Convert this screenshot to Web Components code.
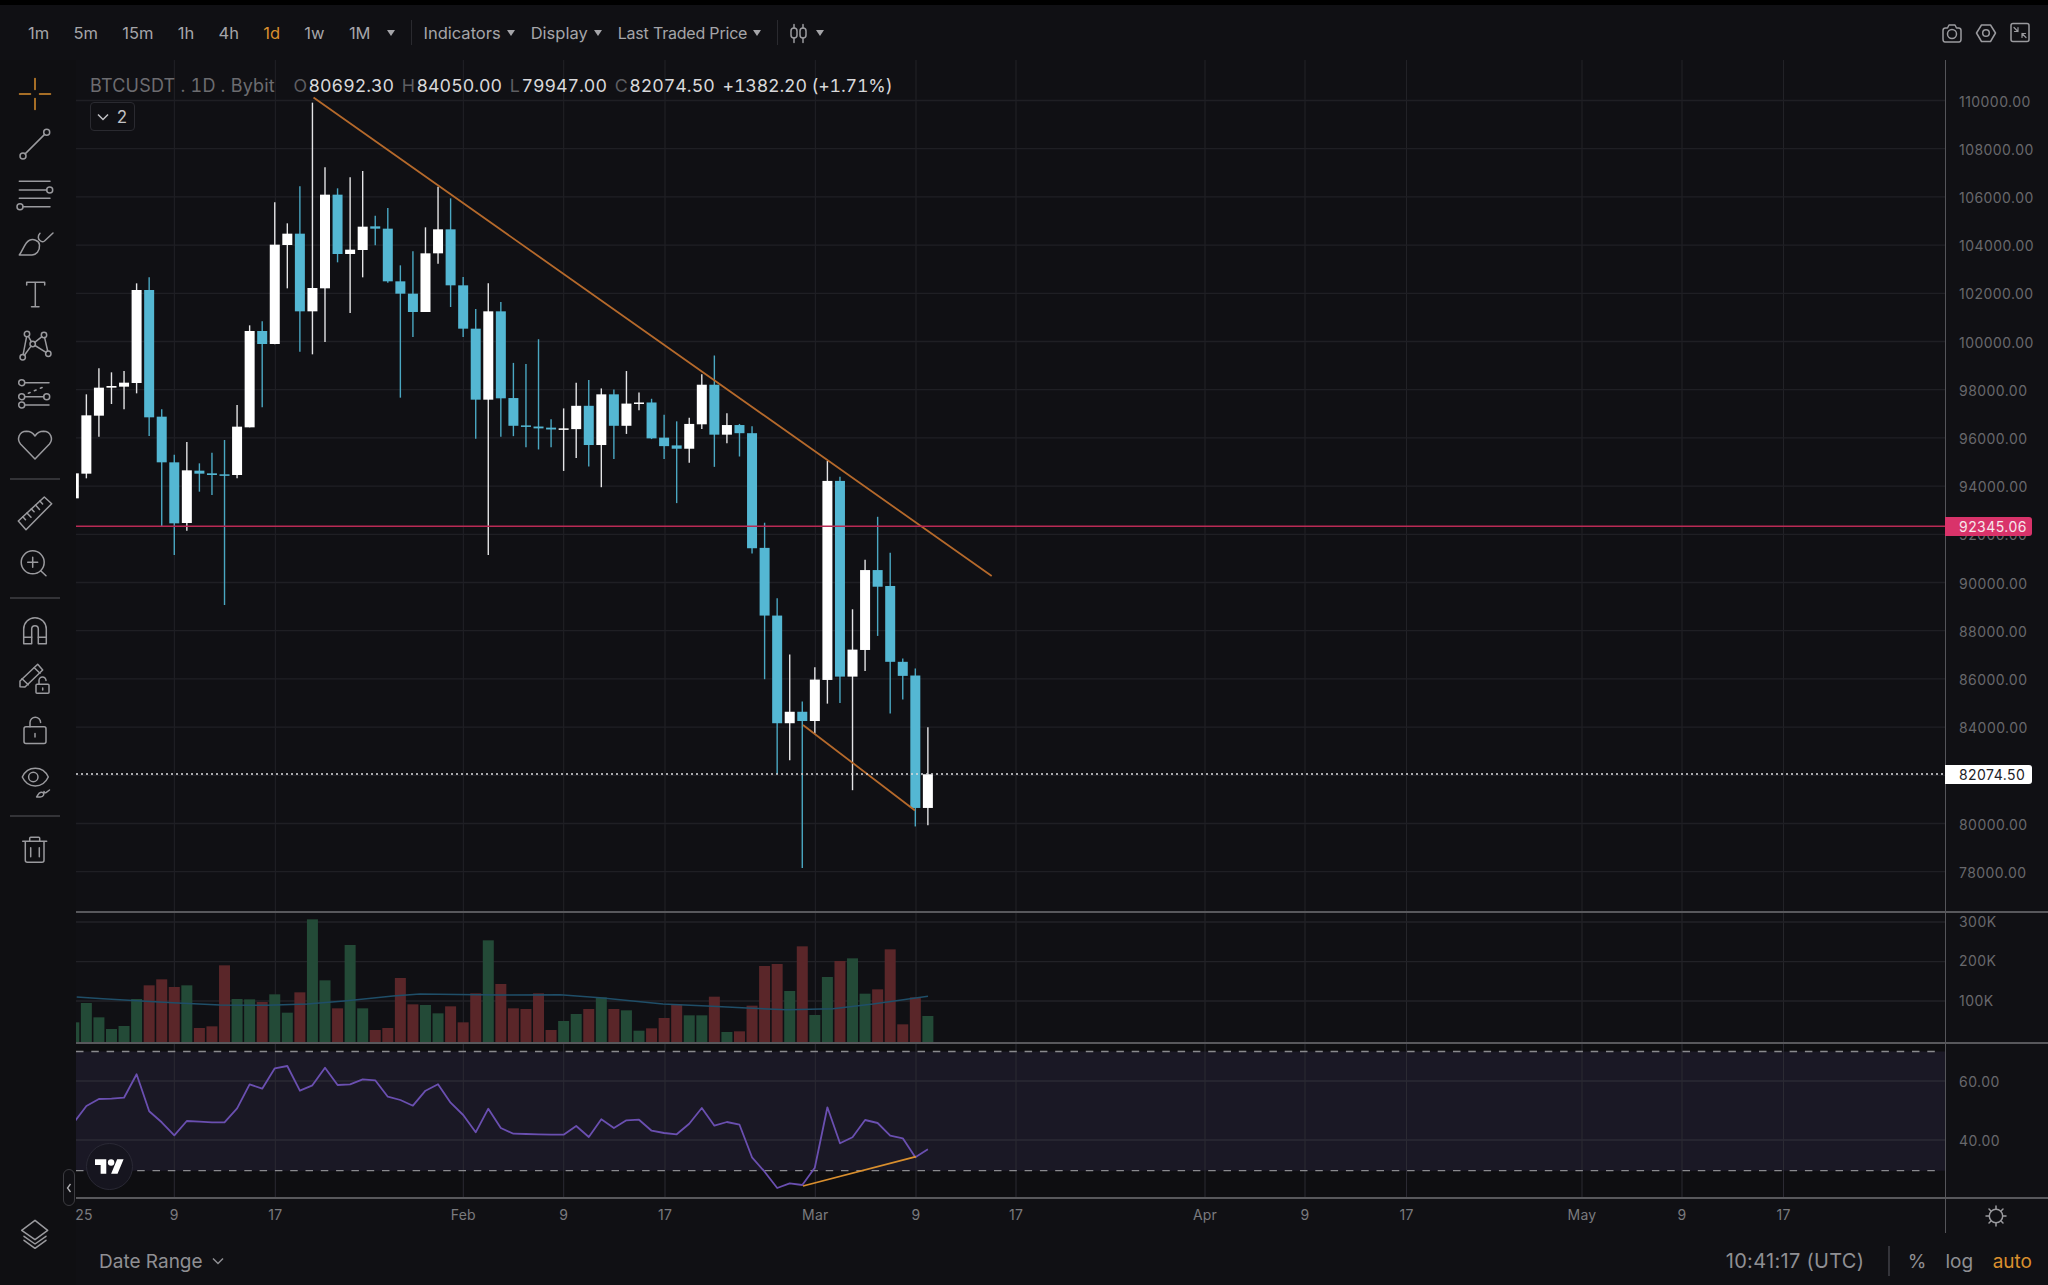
<!DOCTYPE html>
<html lang="en">
<head>
<meta charset="utf-8">
<title>BTCUSDT chart</title>
<style>
  html, body { margin: 0; padding: 0; background: #101014; }
  body { width: 2048px; height: 1285px; overflow: hidden; font-family: Inter, "Liberation Sans", sans-serif; }
</style>
</head>
<body>
<chart-app>
  <chart-toolbar slot="top">
    <tb-item>1m</tb-item><tb-item>5m</tb-item><tb-item>15m</tb-item><tb-item>1h</tb-item><tb-item>4h</tb-item>
    <tb-item active>1d</tb-item><tb-item>1w</tb-item><tb-item>1M</tb-item><tb-item caret></tb-item>
    <tb-sep></tb-sep>
    <tb-item caret>Indicators</tb-item><tb-item caret>Display</tb-item><tb-item caret style="font-size:16px;letter-spacing:-.2px">Last Traded Price</tb-item>
    <tb-sep></tb-sep>
    <tb-item caret style="gap:4px"><tool-icon name="candles" size="22"></tool-icon></tb-item>
    <tool-icon slot="end" name="camera" size="22"></tool-icon>
    <tool-icon slot="end" name="hexgear" size="22"></tool-icon>
    <tool-icon slot="end" name="shrink" size="22"></tool-icon>
  </chart-toolbar>

  <tool-rail slot="rail">
    <tool-icon name="cross" active></tool-icon>
    <tool-icon name="line"></tool-icon>
    <tool-icon name="fib"></tool-icon>
    <tool-icon name="brush"></tool-icon>
    <tool-icon name="text"></tool-icon>
    <tool-icon name="pattern"></tool-icon>
    <tool-icon name="channel"></tool-icon>
    <tool-icon name="heart"></tool-icon>
    <rail-sep></rail-sep>
    <tool-icon name="ruler"></tool-icon>
    <tool-icon name="zoom"></tool-icon>
    <rail-sep></rail-sep>
    <tool-icon name="magnet"></tool-icon>
    <tool-icon name="pencillock"></tool-icon>
    <tool-icon name="lock"></tool-icon>
    <tool-icon name="eye"></tool-icon>
    <rail-sep></rail-sep>
    <tool-icon name="trash"></tool-icon>
    <tool-icon slot="bottom" name="layers"></tool-icon>
  </tool-rail>

  <price-chart slot="chart"></price-chart>

  <status-bar slot="status"></status-bar>
</chart-app>

<script>
const ICONS = {
  cross: '<path d="M18 2.5v11M18 22.5v11M2.5 18h11M22.5 18h11"/>',
  line: '<circle cx="29.7" cy="6.3" r="3"/><circle cx="6" cy="30" r="3"/><path d="M27.6 8.4 8.1 27.9"/>',
  fib: '<path d="M2.3 5.3H33M2.3 14H29.7M2.3 22.3H33M6 30.7H33"/><circle cx="32.7" cy="14" r="3"/><circle cx="3" cy="30.7" r="3"/>',
  brush: '<path d="M2.3 29C6 24 8 16 12.5 14.2 16 12.8 22 14 22.5 19 23 25 19 29 15 29Z"/><path d="M23 7.3C20.5 10 21 13 23 14.5 24.5 16 26 16 27.5 15L36 7"/>',
  text: '<path d="M9.7 9V6.3H27.7V9M18.3 6.3V30.7M14.5 30.7H22"/>',
  pattern: '<circle cx="10" cy="8" r="2.7"/><circle cx="27" cy="9" r="2.7"/><circle cx="15.7" cy="18" r="2.7"/><circle cx="31.3" cy="27.7" r="2.7"/><circle cx="5.7" cy="31.3" r="2.7"/><path d="M9.6 10.7 6.1 28.6M11.4 10.3 14.3 15.7M14 20.1 7.4 29.2M17.8 16.3 24.9 10.7M18 19.5 29 26.3M27.6 11.6 30.7 25"/>',
  channel: '<circle cx="4.7" cy="6.7" r="3"/><circle cx="4.7" cy="20.7" r="3"/><circle cx="29.7" cy="20.7" r="3"/><circle cx="4.7" cy="29" r="3"/><path d="M7.7 6.7H32M7.7 20.7H26.7M7.7 29H32"/><path d="M11.3 17.3 28 10.3" stroke-dasharray="2 4.5"/>',
  heart: '<path d="M18 33 3.5 18C-.5 13 2 5.5 9.5 5.3 13 5.3 16 7 18 10 20 7 23 5.3 26.5 5.3 34 5.5 36.5 13 32.5 18Z"/>',
  ruler: '<path d="M1.3 26 27.3 2 34.7 8.7 9 34.7Z"/><path d="M5.8 21.8l2.7 2.9M10 18l4 4.3M14.4 13.9l2.7 2.9M18.5 10.1l4 4.3M22.9 6.1l2.7 2.9"/>',
  zoom: '<circle cx="15.7" cy="17.3" r="11.5"/><path d="M23.7 25.7 29 30.7M15.7 12.3v10M10.7 17.3h10"/>',
  magnet: '<path d="M6.7 30.7V16A11.3 11.3 0 0 1 29.3 16V30.7H21.3V16A3.3 3.3 0 0 0 14.7 16V30.7Z"/><path d="M6.7 24.3H14.7M21.3 24.3H29.3"/>',
  pencillock: '<path d="M3 23.7V18L20.7 1.3 25.7 7 8 24Z"/><path d="M17.3 4.7 23 10.3M5 15.7 11.3 21.7"/><rect x="19" y="21.3" width="13" height="9" rx="1"/><path d="M22 21.3V17.5a3.5 3.5 0 0 1 7 0M25.7 25v2"/>',
  lock: '<rect x="7" y="13.7" width="22" height="16.7" rx="2"/><path d="M13 13.7V9.5a5.3 5.3 0 0 1 10.6 0M18 20.5v3.5"/>',
  eye: '<path d="M5.3 14C8 8.2 12 5.3 18.3 5.3 24.6 5.3 28.6 8.2 31.3 14 28.6 19.8 24.6 23 18.3 23 12 23 8 19.8 5.3 14Z"/><circle cx="16.3" cy="14" r="4.7"/><path d="M19.6 34C21 32 21.5 29.6 24 29.2 26 29 27.4 30.4 26.6 32 26 33.6 24.6 34 23.2 34ZM27 28.5C27.2 29.5 28.2 30 29 29.6L32.5 27"/>',
  trash: '<path d="M5.7 9.3H29.7M12.7 9.3V6.3Q12.7 5.3 13.7 5.3H21.7Q22.7 5.3 22.7 6.3V9.3M8.3 9.3V28.3Q8.3 30.3 10.3 30.3H25Q27 30.3 27 28.3V9.3M13.7 15.7V24.7M22.3 15.7V24.7"/>',
  layers: '<path d="M18 4.3 30.7 14.3 18 23.7 4.7 14.3Z"/><path d="M7 20.3 18 28 29 20.3M7 24.3 18 32.3 29 24.3"/>',
  candles: '<path d="M4 2.5V6M4 16v4.5M13 2.5V6M13 16v4.5"/><rect x="1" y="6" width="6" height="10" rx="3"/><rect x="10" y="6" width="6" height="10" rx="3"/>',
  camera: '<path d="M4 20Q2 20 2 17V8.5Q2 6 4.5 6H6.5L8 3H14L15.5 6H17.5Q20 6 20 8.5V17Q20 20 18 20Z"/><circle cx="11" cy="12" r="4.5"/>',
  hexgear: '<path d="M6.5 3H15.5L20.5 11 15.5 19.5H6.5L1.5 11Z"/><circle cx="11" cy="11" r="3.3"/>',
  shrink: '<rect x="2" y="1.5" width="18" height="18" rx="2"/><path d="M5 5.5 9 9.5M9 5.5V9.5H5.5M17 15.5 13 11.5M13 15.5V11.5H16.5" stroke-width="1.2"/>',
  sun: '<circle cx="11" cy="11" r="6.7"/><path d="M11 1v3M11 18v3M1 11h3M18 11h3M4 4l2.2 2.2M15.8 15.8 18 18M4 18l2.2-2.2M15.8 6.2 18 4"/>',
};

class ToolIcon extends HTMLElement {
  constructor() {
    super();
    this.attachShadow({ mode: 'open' });
  }
  connectedCallback() {
    const name = this.getAttribute('name');
    const size = this.getAttribute('size') || 36;
    const view = size == 36 ? '0 0 36 36' : '0 0 22 22';
    this.shadowRoot.innerHTML = `
      <style>
        :host { display: flex; align-items: center; justify-content: center; width: ${size}px; height: ${size}px; color: #9a9a9e; }
        :host([active]) { color: #d98f2e; }
        svg { display: block; overflow: visible; fill: none; stroke: currentColor; stroke-width: 1.5; stroke-linejoin: round; stroke-linecap: round; }
      </style>
      <svg width="${size}" height="${size}" viewBox="${view}">${ICONS[name] || ''}</svg>`;
  }
}
customElements.define('tool-icon', ToolIcon);

class TbItem extends HTMLElement {
  constructor() {
    super();
    this.attachShadow({ mode: 'open' }).innerHTML = `
      <style>
        :host { display: inline-flex; align-items: center; gap: 6px; font-size: 16.5px; line-height: 20px; color: #a5a5a9; white-space: nowrap; }
        :host([active]) { color: #d98f2e; }
        .caret { display: none; width: 0; height: 0; border-left: 4.5px solid transparent; border-right: 4.5px solid transparent; border-top: 6px solid #a5a5a9; }
        :host([caret]) .caret { display: block; }
      </style>
      <slot></slot><i class="caret"></i>`;
  }
}
customElements.define('tb-item', TbItem);

class TbSep extends HTMLElement {
  constructor() {
    super();
    this.attachShadow({ mode: 'open' }).innerHTML = `
      <style>:host { display: block; width: 1px; height: 25px; background: #2a2a2f; margin-right: -4px; }</style>`;
  }
}
customElements.define('tb-sep', TbSep);

class ChartToolbar extends HTMLElement {
  constructor() {
    super();
    this.attachShadow({ mode: 'open' }).innerHTML = `
      <style>
        :host { display: flex; align-items: center; height: 55px; padding: 0 17px 0 28px; box-sizing: border-box; }
        .main { display: flex; align-items: center; gap: 16px; }
        .end { display: flex; align-items: center; gap: 12px; margin-left: auto; }
      </style>
      <div class="main"><slot></slot></div>
      <div class="end"><slot name="end"></slot></div>`;
  }
  connectedCallback() {
    // the periods sit a bit wider apart than the menus
    [...this.querySelectorAll('tb-item')].slice(0, 7).forEach(el => { el.style.marginRight = '8.3px'; });
  }
}
customElements.define('chart-toolbar', ChartToolbar);

class RailSep extends HTMLElement {
  constructor() {
    super();
    this.attachShadow({ mode: 'open' }).innerHTML = `
      <style>:host { display: block; width: 50px; height: 2px; background: #333337; margin: 9px 0 7.5px; flex: none; }</style>`;
  }
}
customElements.define('rail-sep', RailSep);

class ToolRail extends HTMLElement {
  constructor() {
    super();
    this.attachShadow({ mode: 'open' }).innerHTML = `
      <style>
        :host { display: flex; flex-direction: column; align-items: center; width: 76px; padding: 9px 6px 26px 0; box-sizing: border-box; background: #0f0f12; height: 100%; }
        .tools { display: flex; flex-direction: column; align-items: center; }
        ::slotted(tool-icon) { height: 50px; }
        .bottom { margin-top: auto; }
      </style>
      <div class="tools"><slot></slot></div>
      <div class="bottom"><slot name="bottom"></slot></div>`;
  }
}
customElements.define('tool-rail', ToolRail);

// page coordinates of the chart
const PLOT = { left: 76, right: 1945 };
const STEP = 12.56;
const cx = i => 73.8 + i * STEP;
const priceY = p => 100.5 + (110000 - p) / 2000 * 48.2;
const TICKS = [
  [174.3, '9'], [275.3, '17'], [463.3, 'Feb'], [563.7, '9'], [665, '17'], [815.3, 'Mar'], [916, '9'], [1016, '17'],
  [1205, 'Apr'], [1305, '9'], [1406.5, '17'], [1582, 'May'], [1682, '9'], [1783.5, '17'],
];

// wick top, body top, body bottom, wick bottom, up
const up = 1, dn = 0;
const candlesA = [
  [1150,1150,1225,1225,up],[913,976,1151,1165,up],[835,893,977,1040,up],[847,888,893,942,up],[843,878,890,958,up],
  [580,600,879,910,up],[562,600,982,1038,dn],[958,980,1117,1308,dn],[1094,1117,1300,1395,dn],[1056,1141,1299,1322,up],
  [1120,1142,1151,1205,dn],[1088,1150,1155,1215,dn],[1050,1153,1157,1545,dn],[945,1010,1155,1165,up],[706,723,1012,1012,up],
  [694,723,762,952,dn],[337,464,762,763,up],[400,431,465,595,up],[289,431,664,785,dn],[38,594,664,793,up],
  [232,314,595,756,up],[295,314,492,517,dn],[262,479,492,669,up],[243,410,480,562,up],[377,409,416,466,dn],
  [354,416,574,578,dn],[526,574,611,923,dn],[484,611,666,741,dn],[412,490,666,666,up],[290,418,490,521,up],
  [325,418,586,651,dn],[561,586,716,741,dn],[657,716,929,1046,dn],[580,664,929,1395,up],[636,664,925,1040,dn],
].map(c => [90 + c[0] / 3, 90 + c[1] / 3, 90 + c[2] / 3, 90 + c[3] / 3, c[4]]);
const candlesB = [
  [170,265,340,368,dn],[173,339,343,398,dn],[106,342,347,404,dn],[322,345,350,398,dn],[293,347,350,462,up],
  [224,286,349,427,up],[216,286,392,450,dn],[239,255,392,506,up],[242,255,340,430,dn],[192,280,340,362,up],
  [250,277,281,298,up],[267,277,374,376,dn],[310,372,395,430,dn],[328,393,402,549,dn],[318,335,402,440,up],
  [201,229,336,349,up],[150,229,364,451,dn],[306,338,364,387,up],[335,338,360,423,dn],[341,360,671,685,dn],
  [602,670,853,1025,dn],[806,853,1144,1282,dn],[958,1113,1144,1244,up],[1085,1113,1138,1535,dn],[993,1026,1138,1172,up],
  [435,489,1027,1091,up],[478,489,1018,1089,dn],[836,945,1018,1325,up],[702,730,946,1003,up],[586,730,775,908,dn],
  [683,773,978,1118,dn],[969,978,1016,1080,dn],[996,1015,1373,1423,dn],[1155,1282,1373,1420,up],
].map(c => [300 + c[0] / 2.703, 300 + c[1] / 2.703, 300 + c[2] / 2.703, 300 + c[3] / 2.703, c[4]]);
const CANDLES = candlesA.concat(candlesB);

// volume bar tops, y = 900 + v / 3
const VOLUME = [
  [367,1],[309,1],[352,1],[387,1],[378,1],[297,1],[256,0],[238,0],[261,0],[256,1],[384,0],[379,0],[196,0],[297,1],[298,1],
  [306,0],[283,1],[338,1],[277,0],[58,1],[241,1],[325,0],[135,1],[325,1],[390,0],[384,0],[234,0],[313,0],[315,1],[340,1],
  [319,0],[367,0],[280,0],[121,1],[252,0],[325,0],[327,0],[280,0],[390,0],[363,1],[342,1],[327,0],[292,1],[327,0],[331,1],
  [392,1],[385,0],[354,0],[314,0],[346,1],[346,1],[290,0],[396,1],[394,0],[317,0],[198,0],[192,0],[273,1],[139,0],[345,1],
  [231,1],[183,0],[175,1],[281,1],[268,0],[148,0],[373,0],[292,0],[348,1],
];
const VOL_MA = [
  [76.7,997],[103,998.7],[137,1000.7],[173,1002.7],[220,1005],[267,1005.3],[307,1004],[347,1000.7],[393,996],[420,994],
  [477,994.7],[500,995],[560,994.7],[600,997.7],[663,1004],[707,1006],[747,1008],[787,1009.7],[833,1008.7],[873,1004],[928,996.3],
];
const RSI = [
  668,618,597,596,593,523,634,667,706,663,665,667,667,625,553,566,505,498,572,556,503,555,553,538,541,590,600,617,572,553,
  608,645,697,626,684,701,702,703,704,704,678,711,658,684,661,659,692,699,703,671,624,677,666,674,772,815,864,850,855,803,
  622,730,712,660,669,707,715,772,748,
];

const vGrid = (y1, y2, color) => TICKS.map(([x]) => `<path d="M${x} ${y1}V${y2}" stroke="${color}" stroke-width="1"/>`).join('');
const hGrid = (ys, color) => ys.map(y => `<path d="M${PLOT.left} ${y}H${PLOT.right}" stroke="${color}" stroke-width="1.3"/>`).join('');

class PriceChart extends HTMLElement {
  constructor() {
    super();
    this.attachShadow({ mode: 'open' });
  }

  connectedCallback() {
    const width = PLOT.right - PLOT.left;
    const prices = [];
    for (let p = 110000; p >= 78000; p -= 2000) prices.push(p);

    const candles = CANDLES.map(([wt, bt, bb, wb, isUp], i) => {
      const x = cx(i);
      const col = isUp ? '#ffffff' : '#54b7d3';
      const wick = isUp ? '#e4e4e6' : '#4aa7c2';
      return `<path d="M${x} ${wt}V${wb}" stroke="${wick}" stroke-width="1.4"/>` +
        `<rect x="${x - 5}" y="${bt}" width="10" height="${Math.max(bb - bt, 1.5)}" fill="${col}"/>`;
    }).join('');

    const bars = VOLUME.map(([top, isUp], i) => {
      const y = 900 + top / 3;
      return `<rect x="${cx(i) - 5.5}" y="${y}" width="11" height="${1042 - y}" fill="${isUp ? '#234a37' : '#5a2629'}"/>`;
    }).join('');

    const rsiPts = RSI.map((v, i) => `${cx(i).toFixed(1)},${(900 + v / 3).toFixed(1)}`).join(' ');
    const maPts = VOL_MA.map(p => p.join(',')).join(' ');

    const priceLabels = prices.map(p =>
      `<span class="tick" style="top:${priceY(p) - 59}px">${p}.00</span>`).join('');
    const timeLabels = TICKS.map(([x, t]) =>
      `<span class="time" style="left:${x - PLOT.left}px">${t}</span>`).join('');

    this.shadowRoot.innerHTML = `
      <style>
        :host { display: grid; position: relative; grid-template-columns: ${width}px 1fr; grid-template-rows: 851px 131px 155px 36px; height: 1173px; font-family: Inter, "Liberation Sans", sans-serif; }
        svg { display: block; }
        .plot { position: relative; }
        .axis { position: relative; border-left: 1.5px solid #55555a; box-sizing: border-box; }
        .sep { border-top: 2px solid #58585c; box-sizing: border-box; }
        .tick { position: absolute; left: 13px; transform: translateY(-50%); font-size: 14px; letter-spacing: .45px; line-height: 18px; color: #68686c; white-space: nowrap; }
        .tag { position: absolute; left: -1px; width: 87px; height: 19px; line-height: 19px; padding-left: 14px; box-sizing: border-box; font-size: 14px; letter-spacing: .45px; border-radius: 0 3px 3px 0; white-space: nowrap; }
        .tag.red { top: 457px; background: #d9336a; color: #f6e6ec; }
        .tag.white { top: 705px; background: #fff; color: #222226; }
        .time { position: absolute; top: 7px; transform: translateX(-50%); font-size: 14px; line-height: 18px; letter-spacing: .2px; color: #7a7a7e; }
        .sun { position: absolute; left: 38.5px; top: 6px; }
        .legend { position: absolute; left: 14px; top: 14.5px; display: flex; align-items: center; font-size: 17.8px; line-height: 22px; white-space: nowrap; color: #d8d8da; font-variant-numeric: tabular-nums; }
        .legend .sym { color: #6c6c70; margin-right: 18.5px; font-size: 18px; letter-spacing: .2px; }
        .legend b { font-weight: 400; color: #5e5e62; margin-right: 1.5px; }
        .legend span { margin-right: 7.8px; }
        .legend .chg { letter-spacing: -.15px; }
        .fold { position: absolute; left: 13.5px; top: 42px; width: 45px; height: 29px; border: 1.5px solid #2a2a30; border-radius: 4px; box-sizing: border-box; display: flex; align-items: center; justify-content: center; gap: 8px; color: #c2c2c5; font-size: 17px; background: #101014; }
        .badge { position: absolute; left: 10px; top: 1083px; width: 47px; height: 47px; box-sizing: border-box; border-radius: 50%; background: #16151f; border: 1px solid #2a2935; display: flex; align-items: center; justify-content: center; }
        .handle { position: absolute; left: -13px; top: 1109px; width: 12px; height: 37px; box-sizing: border-box; border: 1.3px solid #3c3c41; border-radius: 6px; background: #101014; display: flex; align-items: center; justify-content: center; }
      </style>

      <div class="plot">
        <svg width="${width}" height="851" viewBox="${PLOT.left} 60 ${width} 851">
          ${vGrid(60, 911, '#222227')}
          ${hGrid(prices.map(priceY), '#1f1f24')}
          ${candles}
          <path d="M313.5 97.5 991.7 576M803 725 915 810.5" stroke="#b5692b" stroke-width="1.8" fill="none"/>
          <path d="M${PLOT.left} 526.3H${PLOT.right}" stroke="#b92a55" stroke-width="1.5"/>
          <path d="M${PLOT.left} 774H${PLOT.right}" stroke="#dcdcde" stroke-width="1.5" stroke-dasharray="2 3"/>
        </svg>
        <div class="legend">
          <div class="sym">BTCUSDT . 1D . Bybit</div>
          <span><b>O</b>80692.30</span><span><b>H</b>84050.00</span><span><b>L</b>79947.00</span><span><b>C</b>82074.50</span>
          <div class="chg">+1382.20 (+1.71%)</div>
        </div>
        <div class="fold">
          <svg width="12" height="8" viewBox="0 0 12 8" fill="none" stroke="#c2c2c5" stroke-width="1.5"><path d="M1 1.5 6 6.5 11 1.5"/></svg>
          <span>2</span>
        </div>
      </div>
      <div class="axis">
        ${priceLabels}
        <div class="tag red">92345.06</div>
        <div class="tag white">82074.50</div>
      </div>

      <div class="plot sep">
        <svg width="${width}" height="129" viewBox="${PLOT.left} 913 ${width} 129">
          ${vGrid(913, 1042, '#26262b')}
          ${hGrid([922, 961.7, 1001], '#222227')}
          ${bars}
          <polyline points="${maPts}" fill="none" stroke="#1f4e68" stroke-width="1.5"/>
        </svg>
      </div>
      <div class="axis sep">
        <span class="tick" style="top:9px">300K</span>
        <span class="tick" style="top:48px">200K</span>
        <span class="tick" style="top:87.5px">100K</span>
      </div>

      <div class="plot sep" style="background:#0e0e11">
        <svg width="${width}" height="153" viewBox="${PLOT.left} 1044 ${width} 153">
          <rect x="${PLOT.left}" y="1051.5" width="${width}" height="119.2" fill="#1a1825"/>
          ${vGrid(1044, 1197, '#2b2a33')}
          ${hGrid([1081, 1140], '#2b2a35')}
          <path d="M${PLOT.left} 1051.5H${PLOT.right - 8}M${PLOT.left} 1170.7H${PLOT.right - 8}" stroke="#8a8a8e" stroke-width="1.3" stroke-dasharray="7.5 7.8"/>
          <polyline points="${rsiPts}" fill="none" stroke="#6a4fb0" stroke-width="1.8" stroke-linejoin="round"/>
          <path d="M803 1186 916 1156.7" stroke="#d98f2e" stroke-width="1.8"/>
        </svg>
      </div>
      <div class="axis sep">
        <span class="tick" style="top:38px">60.00</span>
        <span class="tick" style="top:97px">40.00</span>
      </div>

      <div class="plot sep">${timeLabels}<span class="time" style="left:8px">25</span></div>
      <div class="axis sep"><tool-icon class="sun" name="sun" size="22"></tool-icon></div>

      <div class="badge">
        <svg width="29" height="15" viewBox="0 4 36 18" fill="#fff"><path d="M14 22H7V11H0V4h14v18zM28 22h-8l7.5-18h8L28 22z"/><circle cx="20" cy="8" r="4"/></svg>
      </div>
      <div class="handle">
        <svg width="6" height="10" viewBox="0 0 6 10" fill="none" stroke="#b5b5b8" stroke-width="1.3"><path d="M4.5 1 1.5 5 4.5 9"/></svg>
      </div>`;
  }
}
customElements.define('price-chart', PriceChart);

class StatusBar extends HTMLElement {
  constructor() {
    super();
    this.attachShadow({ mode: 'open' }).innerHTML = `
      <style>
        :host { display: flex; align-items: center; height: 52px; padding: 4px 16px 0 23px; box-sizing: border-box; font-size: 19px; color: #8f8f93; white-space: nowrap; }
        .range { display: flex; align-items: center; gap: 9px; }
        .right { display: flex; align-items: center; margin-left: auto; }
        .clock { margin-right: 24px; letter-spacing: .3px; font-size: 20px; }
        .bar { width: 1.5px; height: 30px; background: #34343a; margin-right: 18px; }
        .pct { margin-right: 19px; }
        .log { margin-right: 19.5px; }
        .auto { color: #d98f2e; }
      </style>
      <div class="range">
        <span>Date Range</span>
        <svg width="12" height="8" viewBox="0 0 12 8" fill="none" stroke="#8f8f93" stroke-width="1.5"><path d="M1 1.5 6 6.5 11 1.5"/></svg>
      </div>
      <div class="right">
        <span class="clock">10:41:17 (UTC)</span><i class="bar"></i>
        <span class="pct">%</span><span class="log">log</span><span class="auto">auto</span>
      </div>`;
  }
}
customElements.define('status-bar', StatusBar);

class ChartApp extends HTMLElement {
  constructor() {
    super();
    this.attachShadow({ mode: 'open' }).innerHTML = `
      <style>
        :host { display: grid; grid-template-columns: 76px 1972px; grid-template-rows: 5px 55px 1173px 52px; width: 2048px; height: 1285px; background: #101014; }
        .strip { grid-column: 1 / 3; grid-row: 1; background: #000; }
        .top { grid-column: 1 / 3; grid-row: 2; }
        .rail { grid-column: 1; grid-row: 3 / 5; min-height: 0; }
        .chart { grid-column: 2; grid-row: 3; }
        .status { grid-column: 2; grid-row: 4; }
      </style>
      <div class="strip"></div>
      <div class="top"><slot name="top"></slot></div>
      <div class="rail"><slot name="rail"></slot></div>
      <div class="chart"><slot name="chart"></slot></div>
      <div class="status"><slot name="status"></slot></div>`;
  }
}
customElements.define('chart-app', ChartApp);
</script>
</body>
</html>
